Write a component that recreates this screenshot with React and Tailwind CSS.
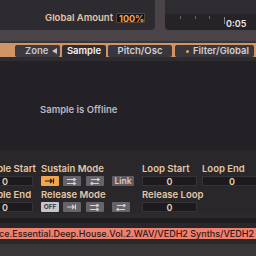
import React from "react";

const F = { fontFamily: "Inter, 'Open Sans', sans-serif" };

function IconToBar({ c }) {
  return (
    <svg width="10" height="6" viewBox="0 0 10 6">
      <path d="M0 3H7M5 1L7 3L5 5M8.5 0.5V5.5" stroke={c} strokeWidth="1.2" fill="none" />
    </svg>
  );
}
function IconDouble({ c }) {
  return (
    <svg width="10" height="7" viewBox="0 0 10 7">
      <path d="M0 1.5H8M6.5 0L8.5 1.5L6.5 3M0 5.5H8M6.5 4L8.5 5.5L6.5 7" stroke={c} strokeWidth="1.1" fill="none" />
    </svg>
  );
}
function IconBack({ c }) {
  return (
    <svg width="10" height="7" viewBox="0 0 10 7">
      <path d="M1 1.5H9M7.5 0L9.2 1.5L7.5 3M1 5.5H9M2.5 4L0.8 5.5L2.5 7" stroke={c} strokeWidth="1.1" fill="none" />
    </svg>
  );
}

function Btn({ children, cls }) {
  return (
    <div className={"h-[10px] w-[18px] flex items-center justify-center rounded-[1px] " + cls}>{children}</div>
  );
}

function Box({ w, children, cls = "justify-center" }) {
  return (
    <div className={"h-[10px] flex items-center bg-[#1c1a1e] border border-[#353238] text-[#e6d0b2] text-[9px] font-semibold leading-none " + cls} style={{ width: w }}>
      {children}
    </div>
  );
}

export default function App() {
  return (
    <div className="w-[256px] h-[256px] overflow-hidden bg-[#4a4448] flex flex-col" style={F}>
      {/* top panels */}
      <div className="h-[30px] flex shrink-0">
        <div className="w-[155px] bg-[#2e2b30] rounded-br-[4px] flex items-center justify-end pr-[10px] gap-[3px] pt-[6px]">
          <span className="text-[9.5px] font-semibold text-[#e2c8a6] leading-none">Global Amount</span>
          <div className="w-[29px] h-[10px] bg-[#17151a] border border-[#5a4530] rounded-[1px] flex items-center pl-[2px] text-[9px] font-bold text-[#f2a54a] leading-none">100%</div>
        </div>
        <div className="w-[10px]" />
        <div className="flex-1 bg-[#262327] rounded-bl-[4px] flex flex-col">
          <div className="h-[14px] bg-[#2f2c31]" />
          <div className="relative flex-1">
            {[15, 30, 44].map((x) => (
              <div key={x} className="absolute top-[2px] w-[1px] h-[3px] bg-[#6a656c]" style={{ left: x }} />
            ))}
            <div className="absolute top-[3px] left-[59px] w-[1px] h-[7px] bg-[#8a858c]" />
            <span className="absolute left-[61px] top-[5px] text-[9px] font-semibold text-[#e8e4ea] leading-none">0:05</span>
          </div>
        </div>
      </div>
      <div className="h-[11px] shrink-0" />
      <div className="h-[2px] bg-[#3a3437] shrink-0" />
      {/* tab bar */}
      <div className="h-[14px] bg-[#cf9566] flex items-start pt-[2px] pl-[15px] shrink-0 text-[9.5px] font-semibold leading-none">
        <div className="w-[45px] h-[12px] bg-[#3c393f] rounded-[2px] flex items-center pl-[10px] gap-[4px] text-[#c9c5cc]">
          Zone
          <svg width="5" height="6" viewBox="0 0 5 6"><path d="M5 0V6L0 3Z" fill="#c9c5cc" /></svg>
        </div>
        <div className="ml-[2px] w-[44px] h-[12px] bg-[#2f2c31] rounded-t-[2px] flex items-center justify-center text-[#f4f1f4]">Sample</div>
        <div className="ml-[2px] w-[64px] h-[12px] bg-[#3a373c] rounded-[2px] flex items-center justify-center text-[#d2ced4]">Pitch/Osc</div>
        <div className="ml-[3px] w-[79px] h-[12px] bg-[#3a373c] rounded-[2px] flex items-center pl-[11px] gap-[4px] text-[#d2ced4]">
          <span className="w-[3px] h-[3px] rounded-full bg-[#f2a044]" />
          Filter/Global
        </div>
      </div>
      <div className="h-[4px] bg-[#2f2c31] shrink-0" />
      {/* content */}
      <div className="h-[89px] bg-[#232126] shrink-0 flex items-center pl-[40px] pt-[8px]">
        <span className="text-[9.5px] font-semibold text-[#bdb8c2] leading-none">Sample is Offline</span>
      </div>
      {/* params */}
      <div className="h-[63px] bg-[#2a272b] shrink-0 flex pt-[14px] text-[9.5px] font-semibold text-[#e2c8a6] leading-none">
        <div className="ml-[-23px] w-[56px] flex flex-col">
          <span className="h-[9px] whitespace-nowrap">Sample Start</span>
          <div className="mt-[3px]"><Box w={56}>0</Box></div>
          <span className="mt-[4px] h-[9px] whitespace-nowrap">Sample End</span>
          <div className="mt-[3px]"><Box w={56}>0</Box></div>
        </div>
        <div className="ml-[8px] flex flex-col">
          <span className="h-[9px] whitespace-nowrap">Sustain Mode</span>
          <div className="mt-[3px] flex">
            <Btn cls="bg-[#f4a44a]"><IconToBar c="#1e1a18" /></Btn>
            <Btn cls="ml-[4px] bg-[#67636b]"><IconDouble c="#d6d2d8" /></Btn>
            <Btn cls="ml-[5px] bg-[#67636b]"><IconBack c="#d6d2d8" /></Btn>
            <div className="ml-[8px] h-[10px] w-[22px] bg-[#5f5b63] rounded-[1px] flex items-center justify-center text-[8.5px] text-[#e2c8a6]">Link</div>
          </div>
          <span className="mt-[4px] h-[9px] whitespace-nowrap">Release Mode</span>
          <div className="mt-[3px] flex">
            <Btn cls="bg-[#c7c4ca]"><span className="text-[6.5px] font-bold text-[#3e3b40]">OFF</span></Btn>
            <Btn cls="ml-[4px] bg-[#67636b]"><IconToBar c="#d6d2d8" /></Btn>
            <Btn cls="ml-[5px] bg-[#67636b]"><IconDouble c="#d6d2d8" /></Btn>
            <Btn cls="ml-[8px] bg-[#67636b]"><IconBack c="#d6d2d8" /></Btn>
          </div>
        </div>
        <div className="ml-[8px] w-[55px] flex flex-col">
          <span className="h-[9px] whitespace-nowrap">Loop Start</span>
          <div className="mt-[3px]"><Box w={55}>0</Box></div>
          <span className="mt-[4px] h-[9px] whitespace-nowrap">Release Loop</span>
          <div className="mt-[3px]"><Box w={55}>0</Box></div>
        </div>
        <div className="ml-[5px] w-[60px] flex flex-col">
          <span className="h-[9px] whitespace-nowrap">Loop End</span>
          <div className="mt-[3px]"><Box w={60}>0</Box></div>
        </div>
      </div>
      {/* bottom */}
      <div className="h-[5px] bg-[#2c2a2d] shrink-0" />
      <div className="h-[5px] bg-[#1f1d20] shrink-0" />
      <div className="h-[5px] bg-[#29272a] shrink-0" />
      <div className="h-[11px] bg-[#f2806e] shrink-0 flex items-center overflow-hidden">
        <span className="ml-[-1px] whitespace-nowrap text-[9px] font-medium text-[#2a1a18] leading-none">ce.Essential.Deep.House.Vol.2.WAV/VEDH2 Synths/VEDH2 Synth Loop</span>
      </div>
      <div className="h-[5px] bg-[#2b282a] shrink-0" />
      <div className="flex-1 bg-[#3a3537]" />
    </div>
  );
}
